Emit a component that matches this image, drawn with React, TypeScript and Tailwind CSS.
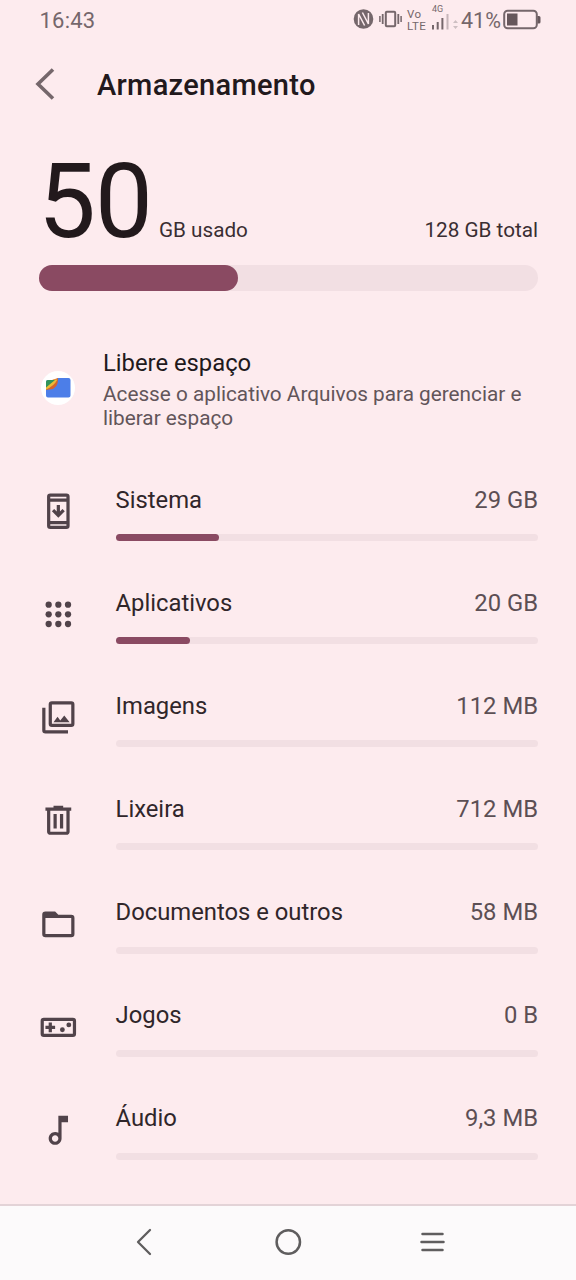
import React from "react";

type Item = { label: string; value: string; used: number; icon: React.ReactNode };

const items: Item[] = [
  {
    label: "Sistema",
    value: "29 GB",
    used: 103,
    icon: (
      <path
        fillRule="evenodd"
        d="M7 1h10a2 2 0 0 1 2 2v18a2 2 0 0 1-2 2H7a2 2 0 0 1-2-2V3a2 2 0 0 1 2-2zM7 3v1h10V3zM7 6v12h10V6zM7 20v1h10v-1zM16 12l-4 4-4-4 1.41-1.41L11 12.17V8h2v4.17l1.59-1.59z"
      />
    ),
  },
  {
    label: "Aplicativos",
    value: "20 GB",
    used: 74,
    icon: (
      <>
        {[6, 12, 18].map((y) => [6, 12, 18].map((x) => <circle key={`${x}-${y}`} cx={x} cy={y} r="1.95" />))}
      </>
    ),
  },
  {
    label: "Imagens",
    value: "112 MB",
    used: 0,
    icon: (
      <path
        fillRule="evenodd"
        d="M8 2h12a2 2 0 0 1 2 2v12a2 2 0 0 1-2 2H8a2 2 0 0 1-2-2V4a2 2 0 0 1 2-2zM8 4v12h12V4zM11.5 11.67l1.69 2.26 2.48-3.1L19 15H9zM2 6v14a2 2 0 0 0 2 2h14v-2H4V6z"
      />
    ),
  },
  {
    label: "Lixeira",
    value: "712 MB",
    used: 0,
    icon: (
      <path
        fillRule="evenodd"
        d="M7 21q-.825 0-1.412-.587T5 19V6H4V4h5V3h6v1h5v2h-1v13q0 .825-.587 1.413T17 21zM17 6H7v13h10zM9 17h2V8H9zM13 17h2V8h-2z"
      />
    ),
  },
  {
    label: "Documentos e outros",
    value: "58 MB",
    used: 0,
    icon: (
      <path
        fillRule="evenodd"
        d="M20 6h-8l-2-2H4a2 2 0 0 0-2 2v12a2 2 0 0 0 2 2h16a2 2 0 0 0 2-2V8a2 2 0 0 0-2-2zM20 18H4V8h16z"
      />
    ),
  },
  {
    label: "Jogos",
    value: "0 B",
    used: 0,
    icon: (
      <>
        <path
          fillRule="evenodd"
          d="M21 6H3a2 2 0 0 0-2 2v8a2 2 0 0 0 2 2h18a2 2 0 0 0 2-2V8a2 2 0 0 0-2-2zM21 16H3V8h18zM6 15h2v-2h2v-2H8V9H6v2H4v2h2z"
        />
        <circle cx="14.5" cy="13.5" r="1.5" />
        <circle cx="18.5" cy="10.5" r="1.5" />
      </>
    ),
  },
  {
    label: "Áudio",
    value: "9,3 MB",
    used: 0,
    icon: (
      <path d="M12 3l.01 10.55c-.59-.34-1.27-.55-2-.55C7.79 13 6 14.79 6 17s1.79 4 4.01 4S14 19.21 14 17V7h4V3h-6zm-1.99 16c-1.1 0-2-.9-2-2s.9-2 2-2 2 .9 2 2-.9 2-2 2z" />
    ),
  },
];

function StatusBar() {
  return (
    <div className="flex h-[42px] items-start pl-[39.5px] pr-[35px] text-[#75676b]">
      <span className="mt-[5px] text-[22px] leading-8 tracking-[0.2px]">16:43</span>
      <div className="ml-auto flex items-start">
        <svg className="mt-[9px] h-5 w-[21px]" viewBox="0 0 21 20" fill="none">
          <circle cx="10.5" cy="10" r="9.8" fill="#75676b" />
          <path d="M5.6 16V5l6 11.5M15.4 4v11l-6-11.500" stroke="#fdebee" strokeWidth="1.500" />
        </svg>
        <svg className="mt-[9px] ml-[5px] h-5 w-[23px]" viewBox="0 0 23 20" fill="none" stroke="#75676b" strokeWidth="2">
          <rect x="6.8" y="2.7" width="9.4" height="14.6" rx="1" />
          <path d="M3.7 5v10M19.3 5v10" strokeWidth="1.8" />
          <path d="M.9 7v6M22.1 7v6" strokeWidth="1.5" />
        </svg>
        <div className="ml-[5px] mt-[8px] flex w-[21px] flex-col text-[11.5px] leading-[12px] tracking-[0.4px]">
          <span>Vo</span>
          <span>LTE</span>
        </div>
        <div className="ml-[3px] mt-[5px] flex w-[20px] flex-col">
          <span className="pl-px text-[9px] leading-[9px]">4G</span>
          <svg className="h-[16px] w-[20px]" viewBox="0 0 20 16" stroke="#75676b" strokeWidth="2">
            <path d="M2 11v4.5M6.7 8v7.5M11.4 4v11.5" />
            <path d="M16.5 0v15.5" opacity=".4" />
          </svg>
        </div>
        <svg className="mt-[19px] ml-[2px] h-[11px] w-[5px]" viewBox="0 0 5 11" fill="#cdbfc2">
          <path d="M0 4L2.5 1 5 4zM0 7h5L2.5 10z" />
        </svg>
        <span className="mt-[5px] ml-[3px] w-[42px] text-[21.5px] leading-8">41%</span>
        <svg className="mt-[9px] h-[21px] w-[38px]" viewBox="0 0 38 21">
          <rect x="1.2" y="1.7" width="32.6" height="17.6" rx="3.5" fill="none" stroke="#75676b" strokeWidth="2" />
          <path d="M4 4.5h10.5v12H4zM34.5 7h1.5q1.5 0 1.5 1.5v4.5q0 1.5-1.5 1.5h-1.5z" fill="#66575b" />
        </svg>
      </div>
    </div>
  );
}

function Row({ item }: { item: Item }) {
  return (
    <div className="flex h-[103.17px] pl-[38.6px] pr-[38px]">
      <svg className="mt-[28px] h-[38.7px] w-[38.7px] shrink-0" viewBox="0 0 24 24" fill="#51434a">
        {item.icon}
      </svg>
      <div className="ml-[38.3px] flex-1 pt-[19.5px]">
        <div className="flex justify-between text-[23.8px] leading-8 whitespace-nowrap">
          <span className="text-[#30262a]">{item.label}</span>
          <span className="text-[#5c4f54]">{item.value}</span>
        </div>
        <div className="mt-[18.5px] h-[7px] rounded-full bg-[#f2dfe3]">
          <div className="h-full rounded-full bg-[#8a4a62]" style={{ width: item.used }} />
        </div>
      </div>
    </div>
  );
}

export default function App() {
  return (
    <div className="flex h-[1280px] w-[576px] flex-col overflow-hidden bg-[#fdebee] font-['Roboto',sans-serif]">
      <StatusBar />
      <header className="flex h-[86px] items-center pl-[34px]">
        <svg className="-mt-[2px] h-9 w-6" viewBox="0 0 24 36" fill="none" stroke="#75676b" strokeWidth="3.6">
          <path d="M19 3.5L4 18l15 14.5" />
        </svg>
        <h1 className="ml-[39px] text-[29px] leading-10 font-medium tracking-[0.3px] text-[#22191c]">Armazenamento</h1>
      </header>
      <section className="h-[217px] px-[38px]">
        <div className="flex h-[137px] items-baseline pt-[14px] text-[20.7px] text-[#3a2e32]">
          <span className="w-[121px] text-[103px] leading-[120px] tracking-[-0.8px] text-[#22191c]">50</span>
          <span>GB usado</span>
          <span className="ml-auto">128 GB total</span>
        </div>
        <div className="mx-[0.5px] h-[26px] rounded-full bg-[#f2dfe3]">
          <div className="h-full w-[199px] rounded-full bg-[#8a4a62]" />
        </div>
      </section>
      <section className="flex h-[119px] pl-[41px]">
        <svg className="mt-[26px] h-[34px] w-[34px]" viewBox="0 0 34 34">
          <circle cx="17" cy="17" r="17" fill="#fff" />
          <path d="M5 11q0-2 2-2h8l2-2h10.500q2 0 2 2v15.500q0 2-2 2H7q-2 0-2-2z" fill="#4c7ee8" />
          <path d="M5 19V11l12-4q.5 11-8.500 11.500Q6 18.500 5 19z" fill="#d5642c" />
          <path d="M5 18.500V15L13 8.500h3.500Q13 15 5 18.500z" fill="#edba36" />
          <path d="M5 16.500V11q0-2 2-2h7z" fill="#31935a" />
        </svg>
        <div className="ml-[28px] flex flex-col pt-[2px] whitespace-nowrap">
          <span className="text-[23.8px] leading-8 text-[#22191c]">Libere espaço</span>
          <span className="mt-[2.5px] text-[20.75px] leading-6 text-[#62555a]">
            Acesse o aplicativo Arquivos para gerenciar e<br />
            liberar espaço
          </span>
        </div>
      </section>
      <main className="h-[740px] shrink-0">
        {items.map((item) => (
          <Row key={item.label} item={item} />
        ))}
      </main>
      <nav className="flex h-[76px] items-center justify-between border-t-2 border-[#e3d3d7] bg-[#fcfafb] px-[130px] pb-[2px]">
        <svg className="h-7 w-7" viewBox="0 0 28 28" fill="none" stroke="#5f5d5e" strokeWidth="2.3" strokeLinecap="round" strokeLinejoin="round">
          <path d="M20 2L8 14l12 12" />
        </svg>
        <svg className="h-7 w-7" viewBox="0 0 28 28" fill="none" stroke="#5f5d5e" strokeWidth="2.5">
          <circle cx="14.3" cy="14" r="11.7" />
        </svg>
        <svg className="h-7 w-7" viewBox="0 0 28 28" fill="none" stroke="#5f5d5e" strokeWidth="2.5" strokeLinecap="round">
          <path d="M4.500 6h20M3.500 14h22M4.500 22h20" />
        </svg>
      </nav>
    </div>
  );
}
